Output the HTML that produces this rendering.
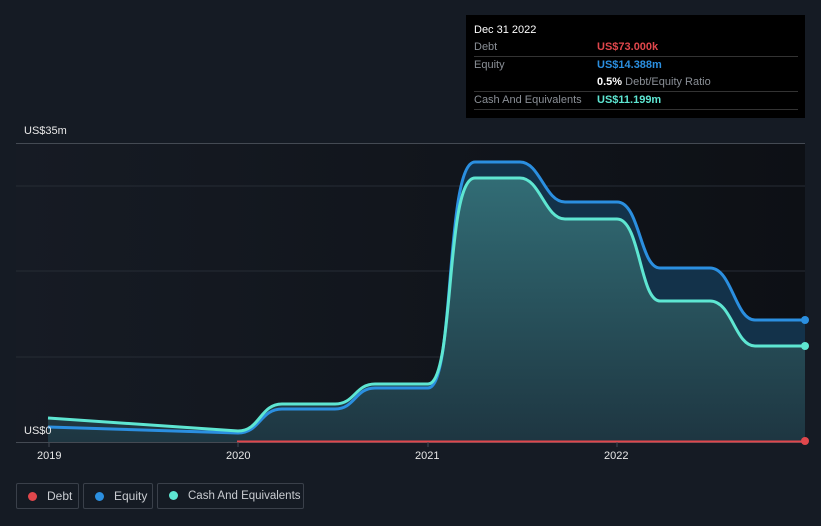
<!DOCTYPE html>
<html><head><style>
html,body{margin:0;height:526px}
body{background:#151b24;width:821px;overflow:hidden;font-family:"Liberation Sans",sans-serif;position:relative}
.tip{position:absolute;left:466px;top:15px;width:339px;height:103px;background:#000;color:#fff;font-size:11px}
.tip .r{position:absolute;left:8px;right:7px;border-bottom:1px solid #333;height:17px;line-height:17px;color:#8a8f96}
.tip .r span{position:absolute;left:123px}
.leg{position:absolute;top:483px;height:26px;border:1px solid #3a404a;border-radius:2px;color:#c9ccd1;font-size:12px;line-height:25px;box-sizing:border-box;white-space:nowrap;overflow:hidden}
.leg i{display:inline-block;width:9px;height:9px;border-radius:50%;margin:0 10px 0 11px;vertical-align:-1px}
.ax{position:absolute;color:#e8e8e8;font-size:11px}
</style></head><body>
<svg width="821" height="526" style="position:absolute;left:0;top:0">
<defs>
<linearGradient id="bg" x1="0" x2="1"><stop offset="0" stop-color="#161b24"/><stop offset="1" stop-color="#0d1015"/></linearGradient>
<linearGradient id="cf" x1="0" y1="0" x2="0" y2="1"><stop offset="0" stop-color="#35737a"/><stop offset="1" stop-color="#1f3640"/></linearGradient>
</defs>
<rect x="16" y="143" width="789" height="299" fill="url(#bg)"/>
<g stroke="#262c35" stroke-width="1"><line x1="16" y1="186" x2="805" y2="186"/><line x1="16" y1="271" x2="805" y2="271"/><line x1="16" y1="357" x2="805" y2="357"/></g>
<line x1="16" y1="143.5" x2="805" y2="143.5" stroke="#444a53"/>
<line x1="16" y1="442.5" x2="805" y2="442.5" stroke="#444a53"/>
<path d="M48 427 L238 433 C260 433 260 409 282 409 L335 409 C355 409 355 388 375 388 L428 388 C455 388 445 162 475 162 L520 162 C540 162 545 202 565 202 L617 202 C640 202 640 268 660 268 L710 268 C732 268 735 320 755 320 L805 320 L805 442 L48 442Z" fill="#13324a"/>
<path d="M48 418 L238 431 C260 431 260 404 282 404 L335 404 C355 404 355 384 375 384 L428 384 C455 384 445 178 475 178 L520 178 C540 178 545 219 565 219 L617 219 C640 219 640 301 660 301 L710 301 C732 301 735 346 755 346 L805 346 L805 442 L48 442Z" fill="url(#cf)" opacity=".9"/>
<path d="M48 427 L238 433 C260 433 260 409 282 409 L335 409 C355 409 355 388 375 388 L428 388 C455 388 445 162 475 162 L520 162 C540 162 545 202 565 202 L617 202 C640 202 640 268 660 268 L710 268 C732 268 735 320 755 320 L805 320" fill="none" stroke="#2b8fe0" stroke-width="3"/>
<path d="M48 418 L238 431 C260 431 260 404 282 404 L335 404 C355 404 355 384 375 384 L428 384 C455 384 445 178 475 178 L520 178 C540 178 545 219 565 219 L617 219 C640 219 640 301 660 301 L710 301 C732 301 735 346 755 346 L805 346" fill="none" stroke="#5ee6d2" stroke-width="3"/>
<line x1="237" y1="441.5" x2="805" y2="441.5" stroke="#e0474c" stroke-width="2"/>
<circle cx="805" cy="320" r="4" fill="#2b8fe0"/><circle cx="805" cy="346" r="4" fill="#5ee6d2"/><circle cx="805" cy="441" r="4" fill="#e0474c"/>
<g stroke="#444a53"><line x1="49" y1="442" x2="49" y2="447"/><line x1="238" y1="442" x2="238" y2="447"/><line x1="428" y1="442" x2="428" y2="447"/><line x1="617" y1="442" x2="617" y2="447"/></g>
</svg>
<div class="ax" style="left:24px;top:125px">US$35m</div>
<div class="ax" style="left:24px;top:425px">US$0</div>
<div class="ax" style="left:37px;top:450px">2019</div>
<div class="ax" style="left:226px;top:450px">2020</div>
<div class="ax" style="left:415px;top:450px">2021</div>
<div class="ax" style="left:604px;top:450px">2022</div>
<div class="tip">
<div style="position:absolute;left:8px;top:9px;font-size:11px">Dec 31 2022</div>
<div class="r" style="top:24px">Debt<span style="color:#e0474c;font-weight:bold">US$73.000k</span></div>
<div class="r" style="top:42px;border:none">Equity<span style="color:#2b8fe0;font-weight:bold">US$14.388m</span></div>
<div class="r" style="top:59px"><span style="color:#fff"><b>0.5%</b> <span style="position:static;color:#8a8f96">Debt/Equity Ratio</span></span></div>
<div class="r" style="top:77px">Cash And Equivalents<span style="color:#5ee6d2;font-weight:bold">US$11.199m</span></div>
</div>
<div class="leg" style="left:16px;width:63px"><i style="background:#e0474c"></i>Debt</div>
<div class="leg" style="left:83px;width:70px"><i style="background:#2b8fe0"></i>Equity</div>
<div class="leg" style="left:157px;width:147px;font-size:11.5px"><i style="background:#5ee6d2"></i>Cash And Equivalents</div>
</body></html>
